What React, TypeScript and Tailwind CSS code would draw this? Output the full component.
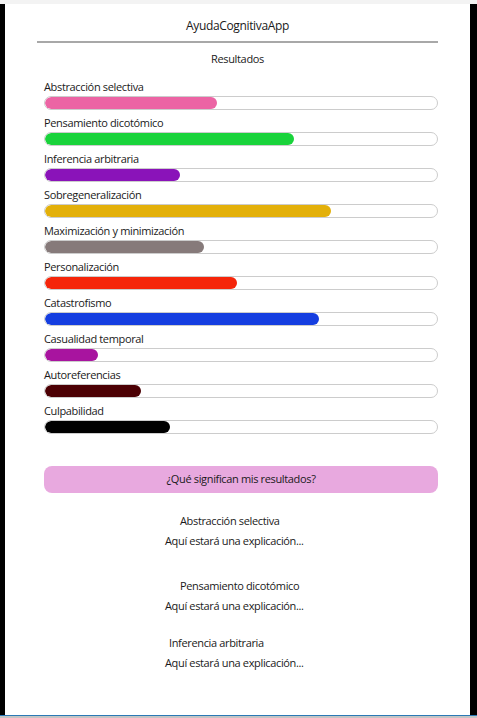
import React from 'react';

const results = [
  { label: 'Abstracción selectiva', pct: 44, color: 'bg-[#ec64a4]' },
  { label: 'Pensamiento dicotómico', pct: 63.5, color: 'bg-[#19d33b]' },
  { label: 'Inferencia arbitraria', pct: 34.5, color: 'bg-[#8a13b9]' },
  { label: 'Sobregeneralización', pct: 73, color: 'bg-[#e3b00a]' },
  { label: 'Maximización y minimización', pct: 40.5, color: 'bg-[#867a7a]' },
  { label: 'Personalización', pct: 49, color: 'bg-[#f5250a]' },
  { label: 'Catastrofismo', pct: 70, color: 'bg-[#153ee0]' },
  { label: 'Casualidad temporal', pct: 13.5, color: 'bg-[#a8149f]' },
  { label: 'Autoreferencias', pct: 24.5, color: 'bg-[#4c0004]' },
  { label: 'Culpabilidad', pct: 32, color: 'bg-[#000000]' },
];

const explanations = [
  { title: 'Abstracción selectiva', pl: 'pl-[175px]', mt: 'mt-0' },
  { title: 'Pensamiento dicotómico', pl: 'pl-[175px]', mt: 'mt-[25px]' },
  { title: 'Inferencia arbitraria', pl: 'pl-[164px]', mt: 'mt-[17px]' },
];

export default function App() {
  return (
    <div className="w-[477px] h-[718px] flex flex-col overflow-hidden text-[#1a1a1a]" style={{ fontFamily: '"Open Sans", "Noto Sans", sans-serif' }}>
      <div className="h-[4px] bg-[#f3f3f3]" />
      <div className="flex flex-1 min-h-0">
        <div className="w-[5px] bg-black" />
        <div className="flex-1 bg-white flex flex-col tracking-[-0.35px]">
          {/* header */}
          <div className="h-[37px] flex items-center justify-center pt-[6px] text-[12px]">AyudaCognitivaApp</div>
          <div className="ml-[32px] mr-[32px] h-[2px] bg-[#a8a8a8]" />
          <div className="text-center text-[11px] mt-[8px] h-[15px] leading-[15px]">Resultados</div>

          {/* barras */}
          <div className="ml-[39px] mr-[32px] mt-[8px] flex flex-col">
            {results.map(r => (
              <div key={r.label} className="h-[36px] flex flex-col justify-end">
                <div className="text-[11px] leading-[14px] mb-[2px]">{r.label}</div>
                <div className="h-[14px] rounded-full border border-[#cccccc] bg-white overflow-hidden">
                  <div className={`h-full rounded-full ${r.color}`} style={{ width: `${r.pct}%` }} />
                </div>
              </div>
            ))}
          </div>

          <button className="ml-[39px] mr-[32px] mt-[32px] h-[27px] rounded-[8px] bg-[#e8a9df] text-[11px] text-[#1a1a1a]">¿Qué significan mis resultados?</button>

          {/* explicaciones */}
          <div className="mt-[18px] flex flex-col text-[11px]">
            {explanations.map(e => (
              <div key={e.title} className={e.mt}>
                <div className={`${e.pl} h-[20px] leading-[20px]`}>{e.title}</div>
                <div className="pl-[160px] h-[20px] leading-[20px]">Aquí estará una explicación...</div>
              </div>
            ))}
          </div>
        </div>
        <div className="w-[7px] bg-black" />
      </div>
      <div className="h-[1px] bg-[#2b79b5]" />
      <div className="h-[2px] bg-[#c4c4c4]" />
    </div>
  );
}
